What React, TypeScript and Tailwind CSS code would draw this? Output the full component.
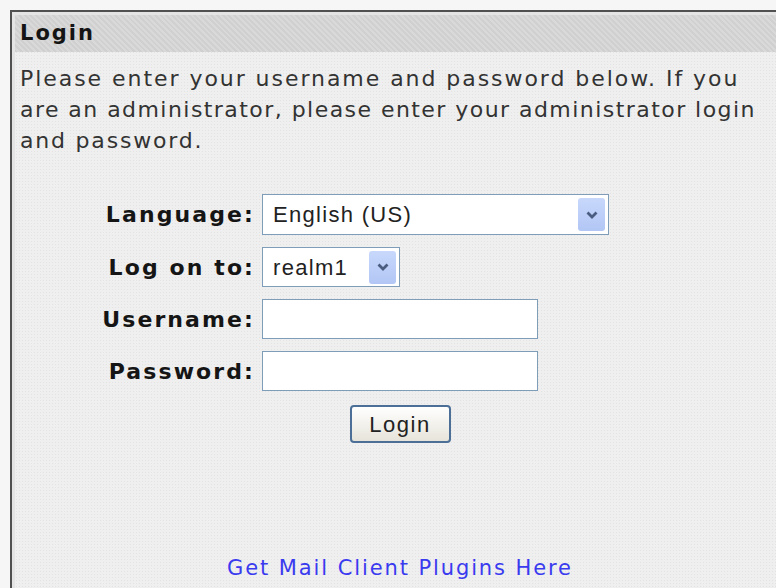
import React from 'react';

const verdana = { fontFamily: '"DejaVu Sans", Verdana, sans-serif' };
const tahoma = { fontFamily: '"Liberation Sans", Arial, sans-serif' };

const Chevron = () => (
  <svg viewBox="0 0 14 14" className="h-[14px] w-[14px]">
    <path d="M2.5 4.5 L7 9 L11.5 4.5" fill="none" stroke="#4a5d80" strokeWidth="2.8" />
  </svg>
);

interface SelectProps {
  value: string;
  className: string;
}

const FakeSelect: React.FC<SelectProps> = ({ value, className }) => (
  <div className={`flex items-center justify-between border border-[#7f9db9] bg-white pl-[10px] pr-[3px] ${className}`}>
    <span className="text-[22px] tracking-[1.3px] text-[#222]" style={tahoma}>{value}</span>
    <span className="flex h-[33px] w-[27px] items-center justify-center rounded-[3px] bg-gradient-to-b from-[#c8d8fc] to-[#b2c6f5]">
      <Chevron />
    </span>
  </div>
);

const Field = () => (
  <input className="h-[40px] w-[276px] border border-[#7f9db9] bg-white outline-none" />
);

const Label: React.FC<{ children: React.ReactNode }> = ({ children }) => (
  <label className="text-right text-[22px] font-bold tracking-[2.1px] text-[#151515]" style={verdana}>
    {children}
  </label>
);

export default function App() {
  return (
    <div className="h-[588px] w-[776px] overflow-hidden bg-[#f6f6f6] pl-[10px] pt-[10px]">
      <div className="h-[600px] w-[775px] border-l-2 border-t-2 border-[#505050] bg-[#e4e4e4] pl-[3px] pt-[3px]">
        <div className="h-full bg-[#efefef] bg-[radial-gradient(#e3e3e3_0.7px,transparent_0.9px)] bg-[length:3px_3px]">
          {/* title bar */}
          <div className="flex h-[37px] items-center bg-[repeating-linear-gradient(45deg,#d0d0d0_0px,#d0d0d0_2px,#d9d9d9_2px,#d9d9d9_4px)] pl-[5px]">
            <h1 className="text-[21px] font-bold tracking-[2px] text-[#141414]" style={verdana}>Login</h1>
          </div>

          <p className="whitespace-nowrap pl-[5px] pt-[11px] text-[22px] leading-[31px] text-[#333]" style={verdana}>
            <span className="block tracking-[1.95px]">Please enter your username and password below. If you</span>
            <span className="block tracking-[1.45px]">are an administrator, please enter your administrator login</span>
            <span className="block tracking-[1.8px]">and password.</span>
          </p>

          <div className="mt-[38px] grid grid-cols-[240px_auto] items-center gap-x-[7px] gap-y-[12px]">
            <Label>Language:</Label>
            <FakeSelect value="English (US)" className="h-[41px] w-[347px]" />
            <Label>Log on to:</Label>
            <FakeSelect value="realm1" className="h-[40px] w-[138px]" />
            <Label>Username:</Label>
            <Field />
            <Label>Password:</Label>
            <Field />
          </div>

          <div className="mt-[14px] flex justify-center">
            <button
              className="h-[38px] w-[101px] rounded-[4px] border-2 border-[#4c6f98] bg-gradient-to-b from-white to-[#e6e4da] text-[22px] tracking-[1.5px] text-[#222]"
              style={tahoma}
            >
              Login
            </button>
          </div>

          <div className="mt-[110px] text-center">
            <a className="text-[21px] tracking-[1.9px] text-[#3a3aef]" style={verdana}>
              Get Mail Client Plugins Here
            </a>
          </div>
        </div>
      </div>
    </div>
  );
}
